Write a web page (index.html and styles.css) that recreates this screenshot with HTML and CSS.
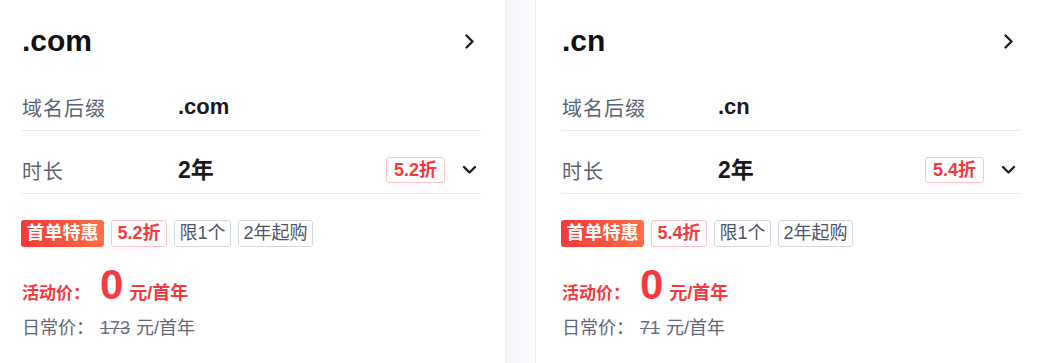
FILE: index.html
```html
<!DOCTYPE html>
<html lang="zh-CN">
<head>
  <meta charset="UTF-8" />
  <title>域名优惠</title>
  <link rel="stylesheet" href="styles.css">
</head>
<body>
  <div class="product-list">
    <div class="product-card card-left">
      <div class="card-head">
        <div class="card-title">.com</div>
        <svg class="icon" viewBox="0 0 20 20"><path d="M5.5 4.5 L11.5 10.5 L5.5 16.5" /></svg>
      </div>
      <div class="spec-row">
        <div class="spec-label">域名后缀</div>
        <div class="spec-value small">.com</div>
      </div>
      <div class="spec-row">
        <div class="spec-label">时长</div>
        <div class="spec-value">2年</div>
        <span class="tag tag-discount">5.2折</span>
        <svg class="icon" viewBox="0 0 20 20"><path d="M3 7 L8.5 12.5 L14 7" /></svg>
      </div>
      <div class="tags">
        <span class="tag tag-hot">首单特惠</span>
        <span class="tag tag-discount">5.2折</span>
        <span class="tag tag-plain">限1个</span>
        <span class="tag tag-plain">2年起购</span>
      </div>
      <div class="price-row">
        <span class="price-label">活动价：</span>
        <span class="price-num">0</span>
        <span class="price-unit">元/首年</span>
      </div>
      <div class="origin-row">
        <span class="origin-label">日常价：</span>
        <span class="origin-num">173</span>
        <span>元/首年</span>
      </div>
    </div>

    <div class="card-gap"></div>

    <div class="product-card card-right">
      <div class="card-head">
        <div class="card-title">.cn</div>
        <svg class="icon" viewBox="0 0 20 20"><path d="M5.5 4.5 L11.5 10.5 L5.5 16.5" /></svg>
      </div>
      <div class="spec-row">
        <div class="spec-label">域名后缀</div>
        <div class="spec-value small">.cn</div>
      </div>
      <div class="spec-row">
        <div class="spec-label">时长</div>
        <div class="spec-value">2年</div>
        <span class="tag tag-discount">5.4折</span>
        <svg class="icon" viewBox="0 0 20 20"><path d="M3 7 L8.5 12.5 L14 7" /></svg>
      </div>
      <div class="tags">
        <span class="tag tag-hot">首单特惠</span>
        <span class="tag tag-discount">5.4折</span>
        <span class="tag tag-plain">限1个</span>
        <span class="tag tag-plain">2年起购</span>
      </div>
      <div class="price-row">
        <span class="price-label">活动价：</span>
        <span class="price-num">0</span>
        <span class="price-unit">元/首年</span>
      </div>
      <div class="origin-row">
        <span class="origin-label">日常价：</span>
        <span class="origin-num">71</span>
        <span>元/首年</span>
      </div>
    </div>
  </div>
</body>
</html>
```

FILE: styles.css
```css
* { margin: 0; padding: 0; box-sizing: border-box; font-family: "Liberation Sans", "Noto Sans CJK SC", sans-serif; }
body { background-color: #fff; }

.product-list {
  display: flex;
  height: 363px;
}

.product-card {
  background: #fff;
}

.card-left {
  width: 505px;
  padding: 0 24px 0 21px;
}

.card-right {
  flex: 1;
  padding: 0 21px 0 25px;
}

.card-gap {
  width: 31px;
  border-left: 1px solid #eceef4;
  border-right: 1px solid #eceef4;
  background: linear-gradient(to right, #f4f6fa, #fbfcfd);
}

.card-head {
  height: 68px;
  padding-top: 22px;
  display: flex;
  justify-content: space-between;
  align-items: flex-start;
}

.card-title {
  font-size: 30px;
  font-weight: bold;
  line-height: 38px;
  color: #111;
  padding-left: 1px;
}

.card-head .icon { margin-top: 9px; }

.icon {
  width: 20px;
  height: 20px;
  fill: none;
  stroke: #1f1f1f;
  stroke-width: 2.4;
  stroke-linecap: round;
  stroke-linejoin: round;
}

.spec-row {
  display: flex;
  align-items: center;
  padding: 24px 0 8px;
  height: 63px;
  border-bottom: 1px solid #e9ebf0;
}

.spec-label {
  width: 157px;
  font-size: 20px;
  line-height: 30px;
  height: 30px;
  color: #5c6373;
  padding-left: 1px;
  letter-spacing: 1px;
  padding-top: 2px;
}

.spec-value {
  flex: 1;
  font-size: 23px;
  line-height: 30px;
  height: 30px;
  font-weight: bold;
  color: #1a1a1a;
}

.spec-value.small { font-size: 22px; }

.spec-row .tag { margin-right: 16px; }

.tags {
  display: flex;
  gap: 7px;
  margin-top: 26px;
}

.tag {
  display: inline-block;
  height: 27px;
  line-height: 25px;
  padding: 0 4.5px;
  font-size: 18px;
  border: 1px solid #d5d9e2;
  border-radius: 3px;
  color: #4e5668;
  white-space: nowrap;
}

.tag-hot {
  border: none;
  line-height: 27px;
  padding: 0 5.5px;
  color: #fff;
  font-weight: bold;
  background: linear-gradient(to right, #f43a3a, #ff6d45);
}

.tag-discount {
  border-color: #ffc4c7;
  color: #f43a40;
  font-weight: bold;
  padding: 0 5.5px;
}

.spec-row .tag-discount {
  height: 26px;
  line-height: 24px;
  padding: 0 7px;
}

.price-row {
  display: flex;
  align-items: baseline;
  margin-top: 17px;
  line-height: 42px;
  color: #f43a40;
  font-weight: bold;
}

.price-label {
  font-size: 17px;
  width: 79px;
  padding-left: 1px;
}

.price-num {
  font-size: 42px;
  margin-right: 6px;
}

.price-unit { font-size: 18px; }

.origin-row {
  display: flex;
  font-size: 18px;
  line-height: 26px;
  color: #5f6677;
}

.origin-label {
  width: 79px;
  padding-left: 1px;
}

.origin-num {
  text-decoration: line-through;
  margin-right: 6px;
  color: #6b7080;
}
```
